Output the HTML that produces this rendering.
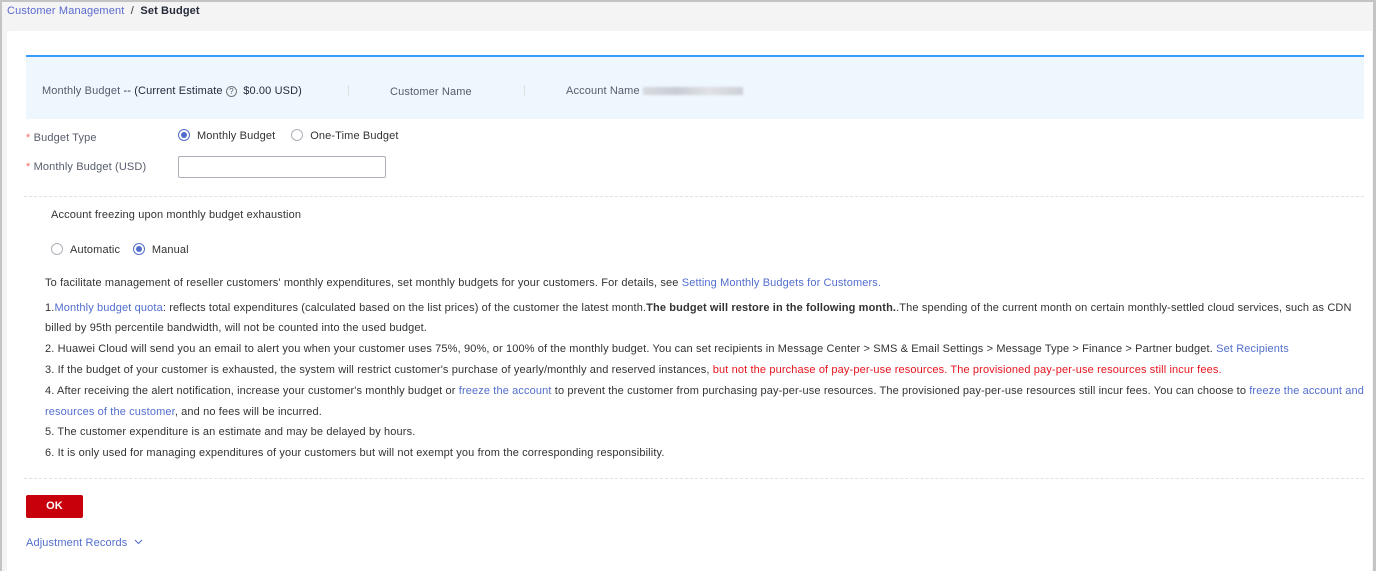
<!DOCTYPE html>
<html><head><meta charset="utf-8"><style>
*{margin:0;padding:0;box-sizing:border-box}
body{width:1376px;height:571px;overflow:hidden;background:#c4c4c4;font-family:"Liberation Sans",Arial,sans-serif;font-size:11px;color:#333;position:relative;letter-spacing:0.13px}
.page{position:absolute;left:2px;top:2px;width:1371px;height:569px;background:#f4f4f4}
.bc{position:absolute;left:5px;top:3px;font-size:11px;color:#333}
.bc a{color:#5b6ad0;text-decoration:none}
.bc b{color:#252b3a}
.card{position:absolute;left:7px;top:31px;width:1365px;height:540px;background:#fff;border-radius:4px 0 0 0}
.ab{position:absolute;white-space:nowrap}
.banner{position:absolute;left:26px;top:55px;width:1338px;height:64px;background:#eef6fe;border-top:2px solid #3a9bff}
.lbl{color:#575d6c}
.star{color:#f66f6a}
.radio{display:inline-block;width:12px;height:12px;border:1px solid #adb0b8;border-radius:50%;vertical-align:-2px;margin-right:7px;position:relative;background:#fff}
.radio.on{border-color:#526ecc}
.radio.on:after{content:"";position:absolute;left:2px;top:2px;width:6px;height:6px;border-radius:50%;background:#526ecc}
.dash{position:absolute;left:24px;width:1340px;border-top:1px dashed #dfe1e6}
.l{color:#526ecc}
.r{color:#e6141e}
</style></head><body>
<div class="page">
<div class="bc"><a>Customer Management</a>&nbsp; / &nbsp;<b>Set Budget</b></div>
</div>
<div class="card"></div>
<div class="banner">
<div class="ab lbl" style="left:16px;top:28px;color:#575d6c">Monthly Budget <span style="color:#252b3a">-- (Current Estimate</span> <span style="display:inline-block;width:11px;height:11px;border:1px solid #777;border-radius:50%;font-size:8px;text-align:center;line-height:9px;vertical-align:0;letter-spacing:0">?</span>&nbsp; <span style="color:#252b3a">$0.00 USD)</span></div>
<div class="ab" style="left:321px;top:27px;color:#ddd">|</div>
<div class="ab lbl" style="left:364px;top:29px">Customer Name</div>
<div class="ab" style="left:497px;top:27px;color:#ddd">|</div>
<div class="ab lbl" style="left:540px;top:28px">Account Name <span style="display:inline-block;width:100px;height:8px;background:linear-gradient(90deg,#d8dbe0,#c9ccd3,#dfe1e5,#cdd0d6);vertical-align:-1px;filter:blur(1px)"></span></div>
</div>
<div class="ab lbl" style="left:26px;top:132px"><span class="star">*</span> Budget Type</div>
<div class="ab" style="left:178px;top:129px"><span class="radio on"></span>Monthly Budget &nbsp;&nbsp;&nbsp; <span class="radio"></span>One-Time Budget</div>
<div class="ab lbl" style="left:26px;top:161px"><span class="star">*</span> Monthly Budget (USD)</div>
<div class="ab" style="left:178px;top:156px;width:208px;height:22px;border:1px solid #adb0b8;border-radius:2px"></div>
<div class="dash" style="top:196px"></div>
<div class="ab" style="left:51px;top:209px">Account freezing upon monthly budget exhaustion</div>
<div class="ab" style="left:51px;top:243px"><span class="radio"></span>Automatic &nbsp;&nbsp; <span class="radio on"></span>Manual</div>
<div class="ab" style="left:45px;top:277px">To facilitate management of reseller customers' monthly expenditures, set monthly budgets for your customers. For details, see <span class="l">Setting Monthly Budgets for Customers.</span></div>
<div class="ab" style="left:45px;top:302px">1.<span class="l">Monthly budget quota</span>: reflects total expenditures (calculated based on the list prices) of the customer the latest month.<b>The budget will restore in the following month.</b>.The spending of the current month on certain monthly-settled cloud services, such as CDN</div>
<div class="ab" style="left:45px;top:322px">billed by 95th percentile bandwidth, will not be counted into the used budget.</div>
<div class="ab" style="left:45px;top:343px">2. Huawei Cloud will send you an email to alert you when your customer uses 75%, 90%, or 100% of the monthly budget. You can set recipients in Message Center &gt; SMS &amp; Email Settings &gt; Message Type &gt; Finance &gt; Partner budget. <span class="l">Set Recipients</span></div>
<div class="ab" style="left:45px;top:364px">3. If the budget of your customer is exhausted, the system will restrict customer's purchase of yearly/monthly and reserved instances, <span class="r">but not the purchase of pay-per-use resources. The provisioned pay-per-use resources still incur fees.</span></div>
<div class="ab" style="left:45px;top:385px">4. After receiving the alert notification, increase your customer's monthly budget or <span class="l">freeze the account</span> to prevent the customer from purchasing pay-per-use resources. The provisioned pay-per-use resources still incur fees. You can choose to <span class="l">freeze the account and</span></div>
<div class="ab" style="left:45px;top:406px"><span class="l">resources of the customer</span>, and no fees will be incurred.</div>
<div class="ab" style="left:45px;top:426px">5. The customer expenditure is an estimate and may be delayed by hours.</div>
<div class="ab" style="left:45px;top:447px">6. It is only used for managing expenditures of your customers but will not exempt you from the corresponding responsibility.</div>
<div class="dash" style="top:478px"></div>
<div class="ab" style="left:26px;top:495px;width:57px;height:23px;background:#c7000b;border-radius:2px;color:#fff;font-weight:bold;text-align:center;line-height:23px">OK</div>
<div class="ab l" style="left:26px;top:537px">Adjustment Records <svg width="9" height="6" viewBox="0 0 9 6" style="vertical-align:1px;margin-left:3px"><path d="M1 1l3.5 3.5L8 1" fill="none" stroke="#526ecc" stroke-width="1"/></svg></div>
</body></html>
